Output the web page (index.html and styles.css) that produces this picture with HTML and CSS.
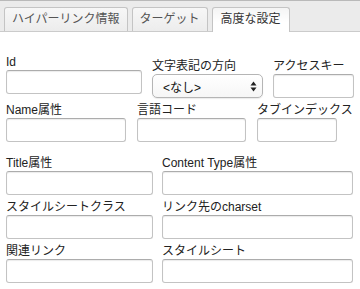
FILE: index.html
```html
<!DOCTYPE html>
<html lang="ja">
<head>
  <meta charset="UTF-8" />
  <title>リンク</title>
  <link rel="stylesheet" href="styles.css">
</head>
<body>
  <div class="tabs">
    <div class="tab">ハイパーリンク情報</div>
    <div class="tab">ターゲット</div>
    <div class="tab active">高度な設定</div>
  </div>

  <div class="panel">
    <div class="row row-first">
      <div class="field f-id">
        <label>Id</label>
        <input type="text" />
      </div>
      <div class="field f-dir">
        <label>文字表記の方向</label>
        <div class="select">
          <span>&lt;なし&gt;</span>
          <svg width="7" height="11" viewBox="0 0 7 11">
            <path d="M3.5 0.5 L6.5 4.5 H0.5 Z" fill="#222" />
            <path d="M3.5 10.5 L6.5 6.5 H0.5 Z" fill="#222" />
          </svg>
        </div>
      </div>
      <div class="field f-key">
        <label>アクセスキー</label>
        <input type="text" />
      </div>
    </div>

    <div class="row">
      <div class="field f-name">
        <label>Name属性</label>
        <input type="text" />
      </div>
      <div class="field f-lang">
        <label>言語コード</label>
        <input type="text" />
      </div>
      <div class="field f-tab">
        <label>タブインデックス</label>
        <input type="text" />
      </div>
    </div>

    <div class="row row-pair row-gap">
      <div class="field f-left">
        <label>Title属性</label>
        <input type="text" />
      </div>
      <div class="field f-right">
        <label>Content Type属性</label>
        <input type="text" />
      </div>
    </div>

    <div class="row row-pair">
      <div class="field f-left">
        <label>スタイルシートクラス</label>
        <input type="text" />
      </div>
      <div class="field f-right">
        <label>リンク先のcharset</label>
        <input type="text" />
      </div>
    </div>

    <div class="row row-pair">
      <div class="field f-left">
        <label>関連リンク</label>
        <input type="text" />
      </div>
      <div class="field f-right">
        <label>スタイルシート</label>
        <input type="text" />
      </div>
    </div>
  </div>
</body>
</html>
```

FILE: styles.css
```css
body {
  margin: 0;
  background: #fff;
  font-family: 'Liberation Sans', 'Noto Sans CJK JP', sans-serif;
  font-size: 12px;
  color: #1a1a1a;
}

.tabs {
  display: flex;
  align-items: flex-end;
  gap: 4px;
  height: 30px;
  padding-left: 4px;
  background: #ebebeb;
  border-top: 1px solid #b9b9b9;
  border-bottom: 1px solid #cbcbcb;
}

.tab {
  height: 23px;
  line-height: 23px;
  padding: 0 7px;
  font-size: 12px;
  color: #555;
  background: linear-gradient(#f7f7f7, #ececec);
  border: 1px solid #c4c4c4;
  border-bottom: none;
  border-radius: 3px 3px 0 0;
}

.tab.active {
  height: 24px;
  margin-bottom: -1px;
  padding: 0 8px;
  color: #333;
  background: linear-gradient(#f4f4f4, #fff 60%);
}

.panel {
  padding: 22px 0 0 6px;
}

.row {
  display: flex;
  align-items: flex-start;
  margin-bottom: 4px;
}

.row-gap {
  margin-top: 13px;
}

.field label {
  display: block;
  height: 16px;
  line-height: 16px;
  white-space: nowrap;
  color: #222;
}

.field input {
  display: block;
  box-sizing: border-box;
  width: 100%;
  height: 24px;
  margin: 0;
  padding: 0 4px;
  border: 1px solid #c3c3c3;
  border-top-color: #acacac;
  border-radius: 3px;
  box-shadow: inset 0 1px 1px rgba(0, 0, 0, 0.08);
  font-size: 12px;
}

.row-first .field {
  padding-top: 4px;
}

.row-first .f-id {
  padding-top: 0;
  width: 136px;
  margin-right: 10px;
}

.f-dir {
  width: 111px;
  margin-right: 10px;
}

.f-key {
  width: 81px;
}

.f-name {
  width: 120px;
  margin-right: 11px;
}

.f-lang {
  width: 109px;
  margin-right: 11px;
}

.f-tab {
  width: 80px;
}

.f-left {
  width: 147px;
  margin-right: 9px;
}

.f-right {
  width: 191px;
}

.select {
  display: flex;
  align-items: center;
  justify-content: space-between;
  box-sizing: border-box;
  height: 24px;
  padding: 0 5px 0 10px;
  border: 1px solid #b5b5b5;
  border-radius: 5px;
  background: linear-gradient(#fff, #f6f6f6);
  box-shadow: 0 1px 1px rgba(0, 0, 0, 0.08);
  color: #111;
}
```
